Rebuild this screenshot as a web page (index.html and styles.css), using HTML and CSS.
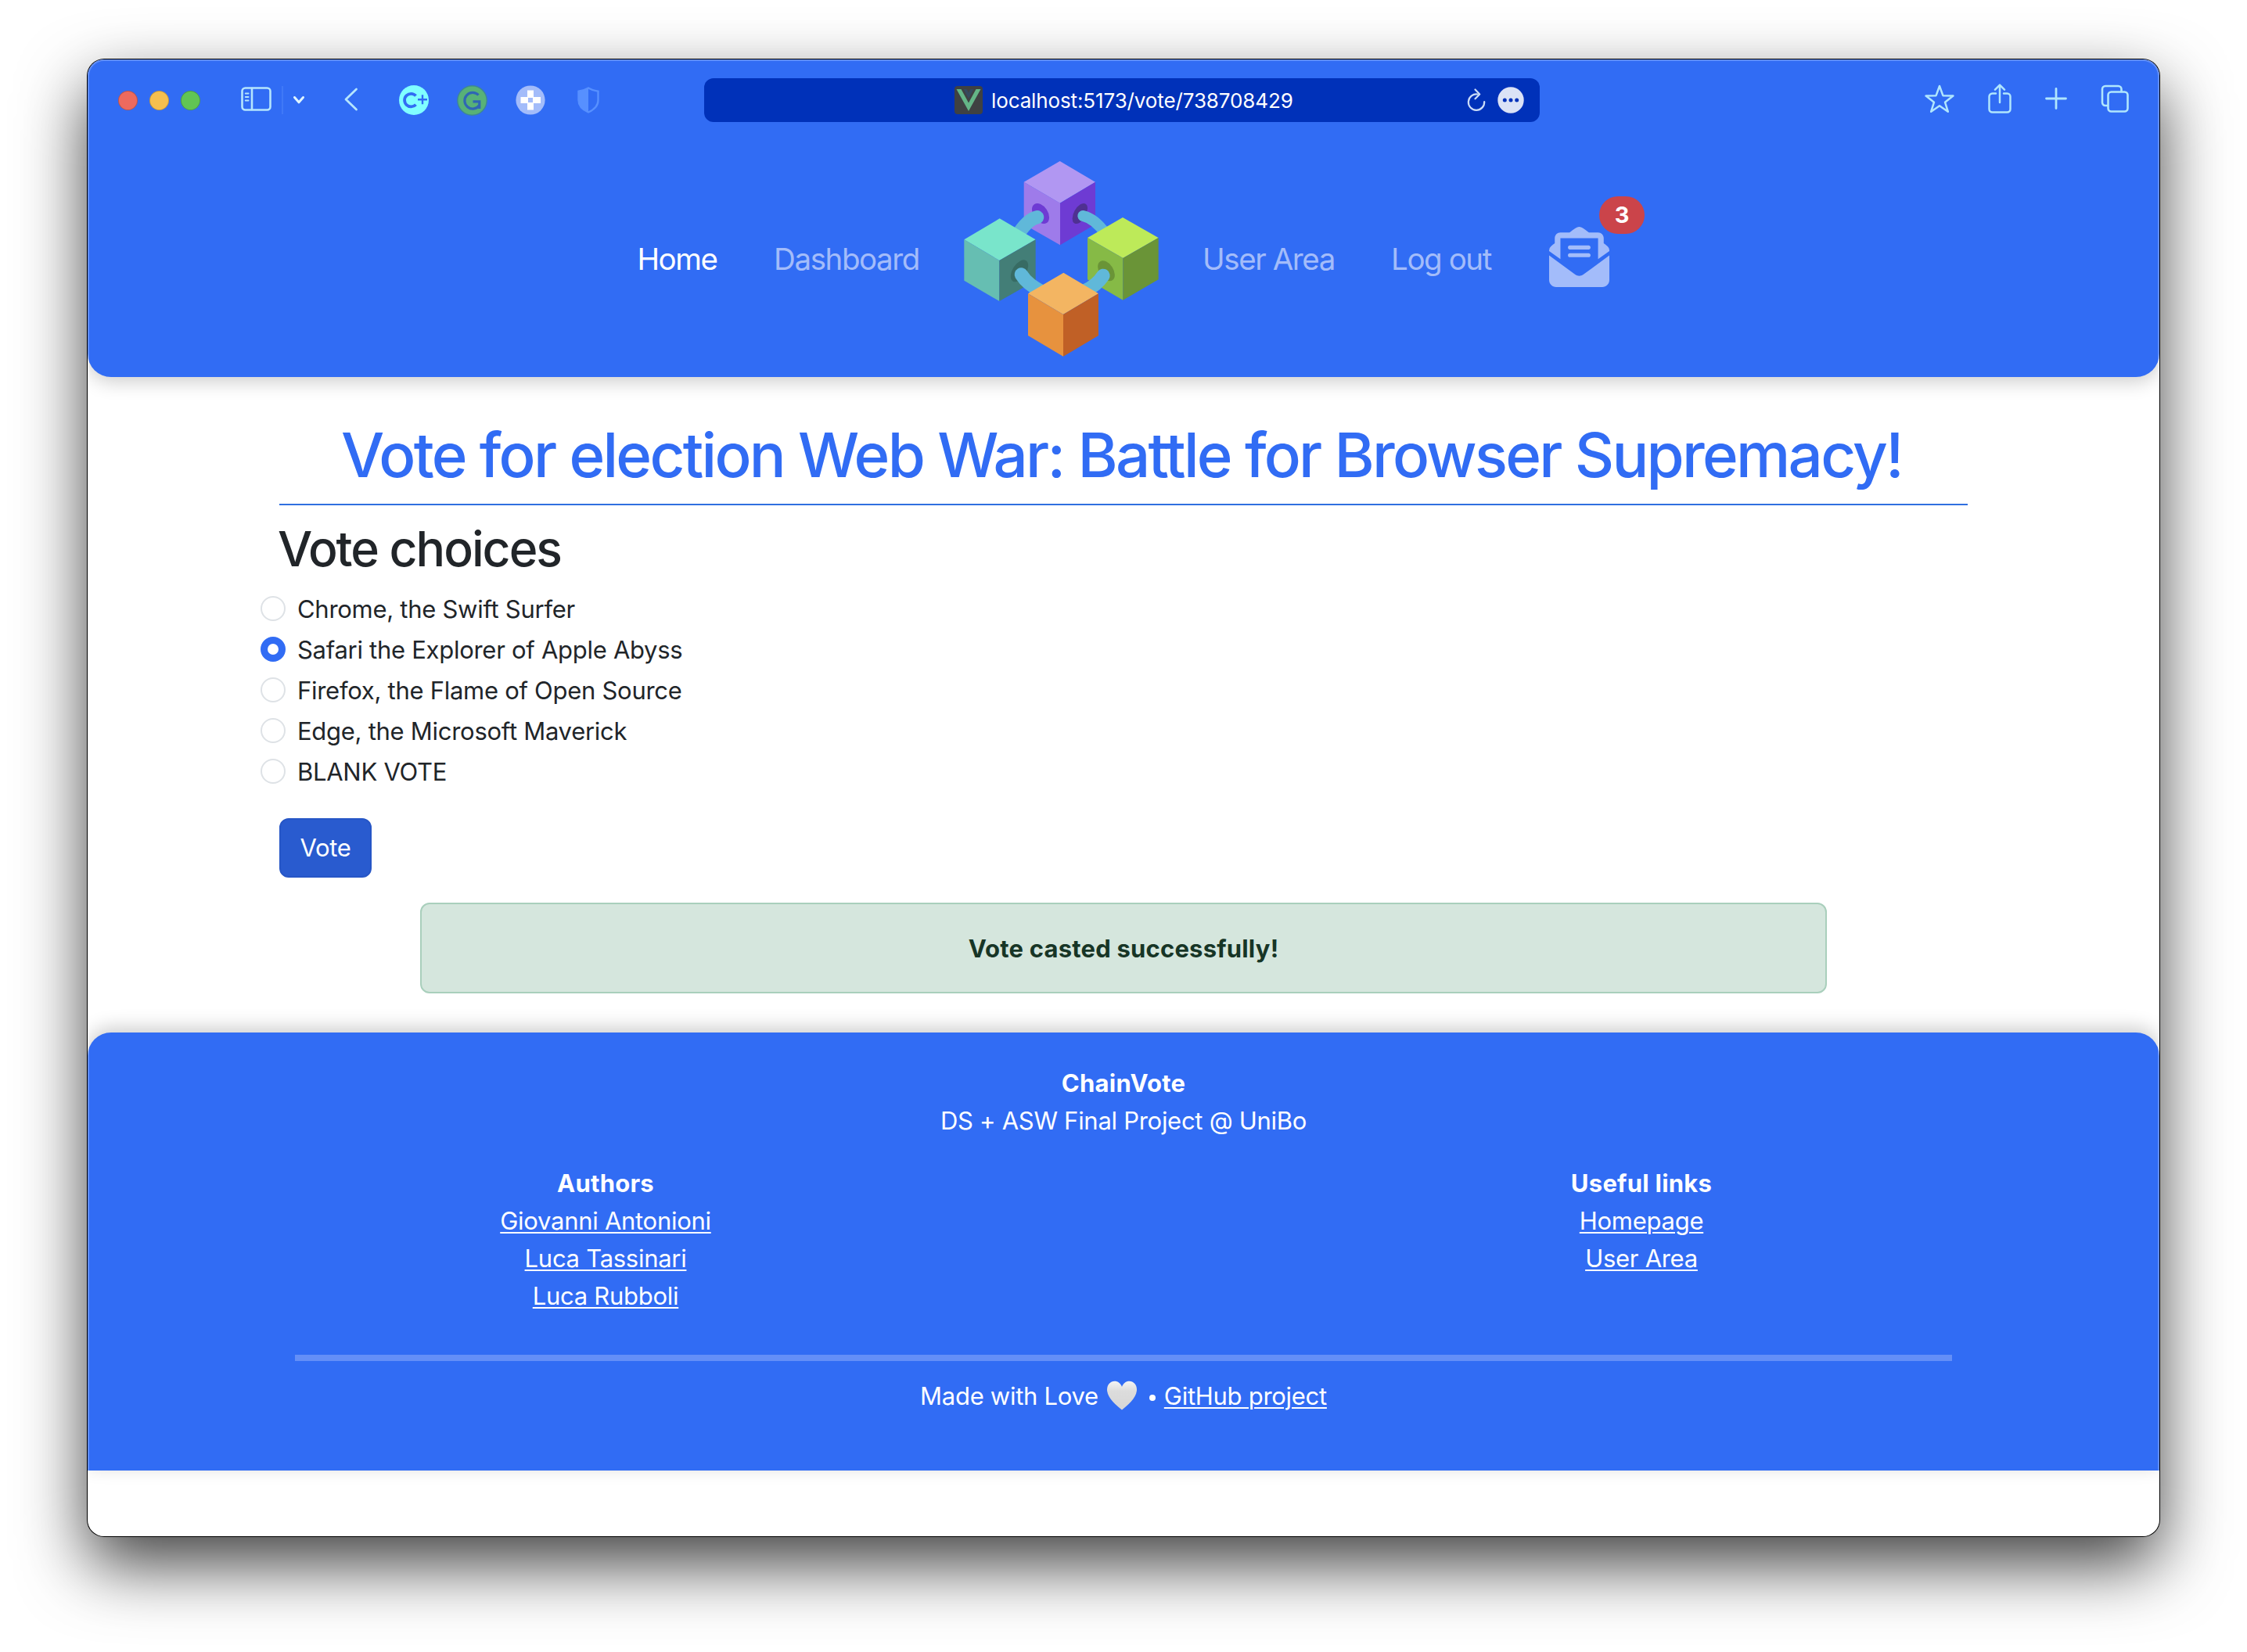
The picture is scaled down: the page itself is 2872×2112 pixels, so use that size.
FILE: index.html
```html
<!DOCTYPE html>
<html lang="en">
<head>
<meta charset="utf-8">
<title>ChainVote</title>
<link rel="stylesheet" href="styles.css">
</head>
<body>
<div class="window">
  <header class="header">
    <div class="toolbar">
      <div class="toolbar-left">
        <span class="light light-red"></span>
        <span class="light light-yellow"></span>
        <span class="light light-green"></span>
        <svg class="ic-sidebar" width="40" height="32" viewBox="0 0 40 32" fill="none" stroke="#b5e5fd" stroke-width="2.6" stroke-linecap="round"><rect x="1.5" y="1.5" width="36" height="28" rx="4"/><path d="M14 2v27"/><path d="M5.8 8.5h3.7M5.8 13h3.7M5.8 17.500h3.700" stroke-width="2"/></svg>
        <span class="divider"></span>
        <svg class="ic-down" width="16" height="12" viewBox="0 0 16 12" fill="none" stroke="#dff5ff" stroke-width="3" stroke-linecap="round" stroke-linejoin="round"><path d="M2.500 2.500 8 8.800l5.500-6.300"/></svg>
        <svg class="ic-back" width="18" height="30" viewBox="0 0 18 30" fill="none" stroke="#b5e5fd" stroke-width="2.800" stroke-linecap="round" stroke-linejoin="round"><path d="M15.500 2 2 15l13.500 13"/></svg>
        <svg class="ic-cplus" width="38" height="38" viewBox="0 0 38 38"><circle cx="19" cy="19" r="19" fill="#80ffff"/><g fill="none" stroke="#316cf4"><path d="M21.500 13.500a8.300 8.300 0 1 0 0 11.200" stroke-width="3.800"/><path d="M24 18.300h12M30 12.300v12" stroke-width="2.400"/></g></svg>
        <svg class="ic-gram" width="39" height="39" viewBox="0 0 39 39"><circle cx="19.500" cy="19.500" r="18.700" fill="#58b177" stroke="#3d8795" stroke-width="1.400"/><path d="M27.500 12.500a10.300 10.300 0 1 0 1.200 13M20.500 20.800h8.300v9.200" fill="none" stroke="#2f66b4" stroke-width="3.200"/></svg>
        <svg class="ic-pad" width="38" height="38" viewBox="0 0 38 38"><circle cx="19" cy="19" r="18.600" fill="#a3bcfa"/><path fill="#fff" fill-rule="evenodd" d="M15 6.500h8v8.500h9v8h-9v8.500h-8V23H6.500v-8H15zM16 16v6h6v-6z"/></svg>
        <svg class="ic-shield" width="28" height="34" viewBox="0 0 28 34"><path d="M14 1.500c4 2.500 7.500 3.500 12.500 4.200V17c0 7.500-4.500 12-12.500 15.500C6 29 1.500 24.500 1.500 17V5.700C6.500 5 10 4 14 1.500z" fill="none" stroke="#5790ff" stroke-width="2.400"/><path d="M14 1v32C6 29 1 24.500 1 17V5.500C6.500 5 10 4 14 1z" fill="#5790ff"/></svg>
      </div>
      <div class="address">
        <svg class="favicon" width="36" height="36" viewBox="0 0 36 36"><rect width="36" height="36" rx="4" fill="#3f4142"/><path d="M11.500 4h4L18 8.500 20.500 4h4L18 16z" fill="#35495e"/><path d="M2.500 4h6L18 21.500 27.500 4h6L18 32z" fill="#64b587"/></svg>
        <span class="url">localhost:5173/vote/738708429</span>
        <svg class="ic-reload" width="24" height="30" viewBox="0 0 24 30" fill="none" stroke="#cbdcf8" stroke-width="2.200" stroke-linecap="round" stroke-linejoin="round"><path d="M13.500 7.500A10.200 10.200 0 1 0 22.200 17"/><path d="M10.500 1.500 16.200 7.500l-5.700 5.800"/></svg>
        <svg class="ic-more" width="34" height="34" viewBox="0 0 34 34"><circle cx="17" cy="17" r="16.700" fill="#dbe2f6"/><g fill="#0031b9"><circle cx="9.300" cy="17" r="2.500"/><circle cx="17" cy="17" r="2.500"/><circle cx="24.700" cy="17" r="2.500"/></g></svg>
      </div>
      <div class="toolbar-right">
        <svg width="38" height="36" viewBox="0 0 38 36" fill="none" stroke="#b0e6fd" stroke-width="2.500" stroke-linejoin="round"><path d="M19 2l4.400 12.200 13 .4L26 22.700l3.800 12L19 27.300 8.200 34.700 12 22.700 1.600 14.600l13-.4z"/></svg>
        <svg width="30" height="38" viewBox="0 0 30 38" fill="none" stroke="#b0e6fd" stroke-width="2.500" stroke-linecap="round" stroke-linejoin="round"><path d="M10 12.500H5.500a4 4 0 0 0-4 4V32.500a4 4 0 0 0 4 4h19a4 4 0 0 0 4-4v-16a4 4 0 0 0-4-4H20"/><path d="M15 24V2M9 7.700 15 1.700l6 6"/></svg>
        <svg width="28" height="28" viewBox="0 0 28 28" fill="none" stroke="#b0e6fd" stroke-width="2.800" stroke-linecap="round"><path d="M14 1.500v25M1.500 14h25"/></svg>
        <svg width="36" height="36" viewBox="0 0 36 36" fill="none" stroke="#b0e6fd" stroke-width="2.600" stroke-linejoin="round"><rect x="9.500" y="9.500" width="25" height="25" rx="4"/><path d="M9.500 27H6a4 4 0 0 1-4-4V6a4 4 0 0 1 4-4h16.500a4 4 0 0 1 4 4v3.500"/></svg>
      </div>
    </div>
    <nav class="nav">
      <a class="nav-link active">Home</a>
      <a class="nav-link">Dashboard</a>
      <svg class="logo" width="250" height="250" viewBox="97 47 750 750">
        <path d="M465 47 601 127 465 208 327 127z" fill="#b197f2"/><path d="M327 127 466 208V369L327 289z" fill="#9e7bea"/><path d="M466 208 601 127V289L466 369z" fill="#6e3bd3"/>
        <ellipse cx="391" cy="248" rx="28" ry="43" transform="rotate(-33 391 248)" fill="#6e3bd3"/><ellipse cx="542" cy="248" rx="23" ry="43" transform="rotate(29 542 248)" fill="#4f3092"/>
        <path d="M378 262Q340 270 300 335" fill="none" stroke="#60b8d9" stroke-width="52" stroke-linecap="round"/><path d="M554 257Q600 268 640 325" fill="none" stroke="#60b8d9" stroke-width="42" stroke-linecap="round"/>
        <path d="M234 267 372 348 233 428 98 348z" fill="#79e5cb"/><path d="M98 348 233 428V584L98 505z" fill="#66beb2"/><path d="M233 428 372 348V505L233 584z" fill="#437e77"/>
        <path d="M706 263 843 341 707 419 571 341z" fill="#bdea59"/><path d="M571 341 707 419V580L571 501z" fill="#86ba46"/><path d="M707 419 843 341V501L707 580z" fill="#6a9437"/>
        <ellipse cx="310" cy="468" rx="26" ry="47" transform="rotate(33 310 468)" fill="#376b63"/><ellipse cx="643" cy="468" rx="27" ry="43" transform="rotate(-33 643 468)" fill="#6a9437"/>
        <path d="M317 482Q340 520 400 550" fill="none" stroke="#60b8d9" stroke-width="52" stroke-linecap="round"/><path d="M631 486Q605 525 560 545" fill="none" stroke="#60b8d9" stroke-width="52" stroke-linecap="round"/>
        <path d="M479 475 613 555 478 635 343 555z" fill="#f3b562"/><path d="M343 555 478 635V796L343 716z" fill="#e7923e"/><path d="M478 635 613 555V716L478 796z" fill="#c06026"/>
      </svg>
      <a class="nav-link">User Area</a>
      <a class="nav-link">Log out</a>
      <div class="mail">
        <svg width="77" height="77" viewBox="0 0 512 512" fill="#a3bcfa"><path d="M176 192h160c8.840 0 16-7.160 16-16v-2c0-8.840-7.160-16-16-16H176c-8.840 0-16 7.160-16 16v2c0 8.840 7.160 16 16 16zm-16 50c0 8.840 7.160 16 16 16h160c8.840 0 16-7.160 16-16v-2c0-8.840-7.160-16-16-16H176c-8.840 0-16 7.160-16 16zm96 175.130c-12 0-22-2-34-11L0 243V452c0 33 27 60 60 60h392c33 0 60-27 60-60V243L290 406.130c-12 9-22 11-34 11zM493.610 162.950c-8.850-6.940-17.240-13.470-29.610-22.810V96c0-26.510-21.490-48-48-48h-77.550c-3.040-2.200-5.870-4.260-9.040-6.560C312.600 29.170 279.200-.350 256 0c-23.200-.350-56.590 29.170-73.410 41.440-3.170 2.300-6 4.360-9.040 6.560H96c-26.510 0-48 21.490-48 48v44.140c-12.370 9.330-20.760 15.870-29.610 22.810A47.995 47.995 0 0 0 0 200.720v4.650L96 274V96h320v178l96-68.630v-4.650c0-14.740-6.780-28.670-18.390-37.770z"/></svg>
        <span class="badge">3</span>
      </div>
    </nav>
  </header>

  <main class="main">
    <h1 class="title">Vote for election Web War: Battle for Browser Supremacy!</h1>
    <h2 class="subtitle">Vote choices</h2>
    <div class="choices">
      <label class="choice"><span class="radio"></span>Chrome, the Swift Surfer</label>
      <label class="choice"><span class="radio checked"></span>Safari the Explorer of Apple Abyss</label>
      <label class="choice"><span class="radio"></span>Firefox, the Flame of Open Source</label>
      <label class="choice"><span class="radio"></span>Edge, the Microsoft Maverick</label>
      <label class="choice"><span class="radio"></span>BLANK VOTE</label>
    </div>
    <button class="vote-btn" type="button">Vote</button>
    <div class="alert">Vote casted successfully!</div>
  </main>

  <footer class="footer">
    <div class="footer-head"><strong>ChainVote</strong><span>DS + ASW Final Project @ UniBo</span></div>
    <div class="footer-cols">
      <div class="footer-col"><strong>Authors</strong><a>Giovanni Antonioni</a><a>Luca Tassinari</a><a>Luca Rubboli</a></div>
      <div class="footer-col"><strong>Useful links</strong><a>Homepage</a><a>User Area</a></div>
    </div>
    <div class="rule"></div>
    <div class="made">
      <span>Made with Love</span>
      <svg class="heart" width="40" height="38" viewBox="0 0 40 38"><defs><linearGradient id="heart-fill" x1="0" y1="0" x2="0" y2="1"><stop offset="0" stop-color="#f4f4f4"/><stop offset=".35" stop-color="#dcdcdc"/><stop offset="1" stop-color="#d6d6d6"/></linearGradient></defs><path d="M20 37.500C13 32 1 22 1 11.500 1 5 5.500.8 10.500.8c4.500 0 7.700 2.700 9.500 7.200C21.800 3.500 25 .8 29.500.8 34.500.8 39 5 39 11.500 39 22 27 32 20 37.500z" fill="url(#heart-fill)"/></svg>
      <span class="dot"></span>
      <a>GitHub project</a>
    </div>
  </footer>
</div>
</body>
</html>
```
FILE: styles.css
```css
* { box-sizing: border-box; }

body {
  margin: 0;
  min-height: 2112px;
  padding: 76px 112px 0;
  background: #fff;
  color: #212529;
  font: 430 31px/48px Inter, "Liberation Sans", sans-serif;
  letter-spacing: -0.28px;
}

svg { display: block; flex: none; }
strong { font-weight: 700; letter-spacing: 0.25px; }

.window {
  position: relative;
  height: 1888px;
  border-radius: 21px;
  box-shadow: 0 0 0 1px #000, 0 36px 86px rgba(0, 0, 0, .75);
  background: #fff;
  overflow: hidden;
}
/* light inner edge of the window frame */
.window::after {
  content: "";
  position: absolute;
  inset: 0;
  border-radius: 21px;
  box-shadow: inset 0 0 0 2px rgba(255, 255, 255, .22);
  pointer-events: none;
}

.header {
  height: 406px;
  background: #316cf4;
  border-radius: 0 0 30px 30px;
  box-shadow: 0 6px 24px rgba(0, 0, 0, .2);
}

/* browser toolbar */
.toolbar {
  display: grid;
  grid-template-columns: 788px 1068px 1fr;
  align-items: center;
  height: 104px;
}
.toolbar-left { display: flex; align-items: center; padding-left: 39px; }
.light { width: 25px; height: 25px; margin-right: 15px; border-radius: 50%; border: 1px solid rgba(0, 0, 0, .2); }
.light-red { background: #ed6a5e; }
.light-yellow { background: #f5bf4f; }
.light-green { background: #61c554; }
.ic-sidebar { margin: -2px 0 0 37px; }
.divider { width: 2px; height: 36px; margin-left: 12px; background: #4079f7; }
.ic-down { margin-left: 12px; }
.ic-back { margin: -2px 0 0 50px; }
.ic-cplus { margin-left: 52px; }
.ic-gram { margin-left: 36px; }
.ic-pad { margin-left: 36px; }
.ic-shield { margin: -1px 0 0 41px; }

.address {
  display: flex;
  align-items: center;
  height: 56px;
  padding: 0 20px 0 320px;
  border-radius: 12px;
  background: #0031b9;
  color: #fff;
}
.url { margin: 1px 0 0 11px; font-size: 26px; letter-spacing: -0.12px; }
.ic-reload { margin-left: auto; }
.ic-more { margin-left: 15px; }

.toolbar-right {
  display: flex;
  align-items: center;
  justify-content: flex-end;
  gap: 43px;
  padding-right: 39px;
  margin-top: -5px;
}

/* site navigation */
.nav {
  display: grid;
  grid-template-columns: 150px 283px 264px 268px 173px 177px;
  align-items: center;
  justify-items: center;
  height: 302px;
  padding-left: 680px;
}
.nav-link { margin-left: -3px; color: #a3bcfa; font-size: 38.500px; letter-spacing: -0.037em; }
.nav-link.active { color: #fff; }
.mail { position: relative; margin-top: -5px; }
.badge {
  position: absolute;
  left: 64px;
  top: -39px;
  width: 58px;
  height: 48px;
  border-radius: 24px;
  background: #cb444a;
  color: #fff;
  font-size: 29px;
  font-weight: 700;
  text-align: center;
}

/* ballot */
.main { height: 838px; padding: 52px 245px 0; }
.title {
  margin: 0;
  height: 112px;
  padding-right: 5px;
  border-bottom: 2px solid #2f6fe0;
  color: #316cf4;
  font-size: 78px;
  font-weight: 500;
  line-height: 96px;
  letter-spacing: -0.0352em;
  text-align: center;
  white-space: nowrap;
}
.subtitle { margin: 17px 0 16px -2px; font-size: 62.500px; font-weight: 500; line-height: 76px; letter-spacing: -0.0325em; }
.choices { margin-left: -24px; }
.choice { display: flex; height: 52px; }
.radio {
  width: 32px;
  height: 32px;
  margin: 7px 15px 0 0;
  border: 2px solid #dee2e6;
  border-radius: 50%;
  background: #fff;
}
.radio.checked { border: 9px solid #316cf4; }
.vote-btn {
  display: block;
  width: 118px;
  height: 76px;
  margin-top: 31px;
  padding: 0;
  border: 2px solid #2656c6;
  border-radius: 12px;
  background: #295bcf;
  color: #fff;
  font: inherit;
  letter-spacing: inherit;
}
.alert {
  width: 1798px;
  height: 116px;
  margin: 32px auto 0;
  border: 2px solid #a9cfbc;
  border-radius: 12px;
  background: #d5e6dd;
  color: #173526;
  font-weight: 700;
  line-height: 113px;
  letter-spacing: 0.2px;
  text-align: center;
}

/* footer */
.footer {
  height: 560px;
  padding-top: 41px;
  border-radius: 30px 30px 0 0;
  background: #316cf4;
  box-shadow: 0 -6px 24px rgba(0, 0, 0, .2);
  color: #fff;
}
.footer a { text-decoration: underline; text-decoration-thickness: 2px; text-underline-offset: 3px; }
.footer-head, .footer-col { display: flex; flex-direction: column; align-items: center; }
.footer-cols { display: grid; grid-template-columns: 1fr 1fr; height: 192px; margin-top: 32px; }
.rule { height: 8px; margin: 51px 265px 21px; background: #648ff7; }
.made { display: flex; justify-content: center; align-items: center; }
.heart { margin: -2px 0 0 10px; }
.dot { width: 8px; height: 8px; margin: 3px 11px 0 15px; border-radius: 50%; background: #fff; }
```
